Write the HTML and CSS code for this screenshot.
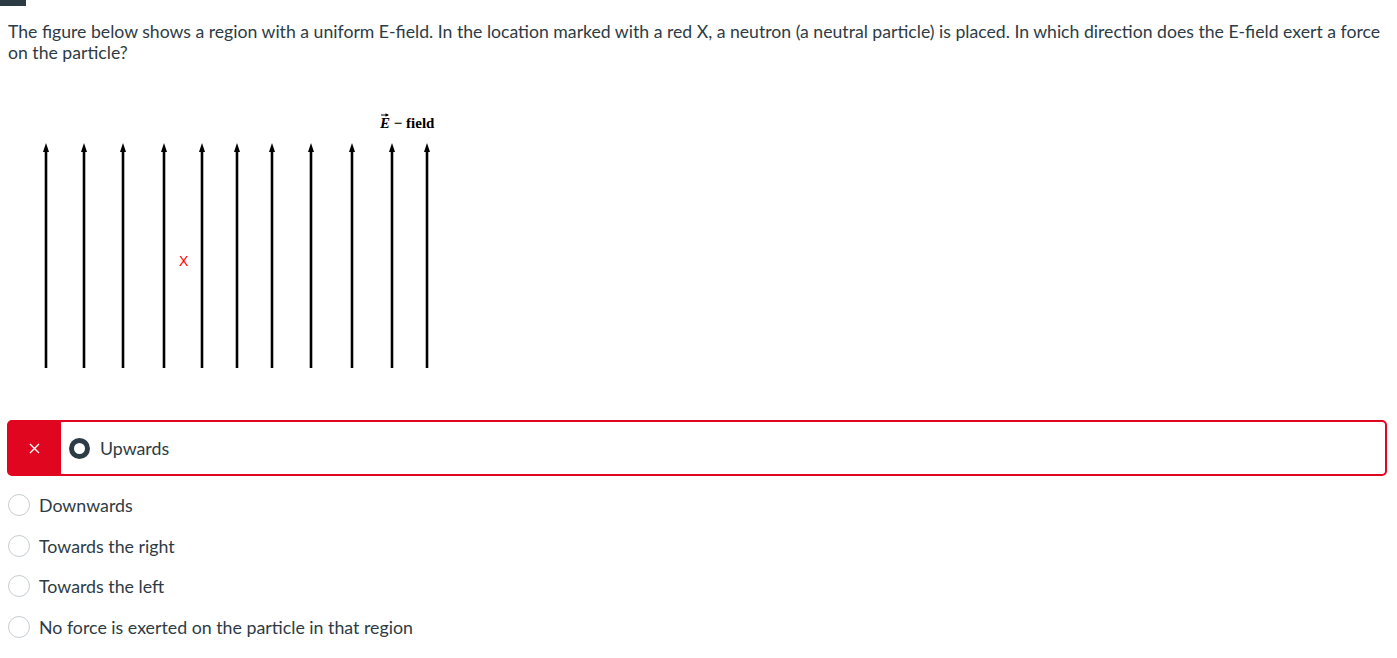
FILE: index.html
```html
<!DOCTYPE html>
<html>
<head>
<meta charset="utf-8">
<link rel="stylesheet" href="styles.css">
</head>
<body>
<div class="topbar"></div>
<div class="question">
  <p class="qtext">The figure below shows a region with a uniform E-field. In the location marked with a red X, a neutron (a neutral particle) is placed. In which direction does the E-field exert a force on the particle?</p>
  <div class="figure">
    <svg width="400" height="262" viewBox="0 0 400 262">
      <g stroke="#000" stroke-width="2.6">
        <line x1="6" y1="40" x2="6" y2="258"/>
        <line x1="44" y1="40" x2="44" y2="258"/>
        <line x1="83" y1="40" x2="83" y2="258"/>
        <line x1="124" y1="40" x2="124" y2="258"/>
        <line x1="162" y1="40" x2="162" y2="258"/>
        <line x1="197" y1="40" x2="197" y2="258"/>
        <line x1="232" y1="40" x2="232" y2="258"/>
        <line x1="271" y1="40" x2="271" y2="258"/>
        <line x1="312" y1="40" x2="312" y2="258"/>
        <line x1="352" y1="40" x2="352" y2="258"/>
        <line x1="387" y1="40" x2="387" y2="258"/>
      </g>
      <g fill="#000">
        <polygon points="6,33 9,42 3,42"/>
        <polygon points="44,33 47,42 41,42"/>
        <polygon points="83,33 86,42 80,42"/>
        <polygon points="124,33 127,42 121,42"/>
        <polygon points="162,33 165,42 159,42"/>
        <polygon points="197,33 200,42 194,42"/>
        <polygon points="232,33 235,42 229,42"/>
        <polygon points="271,33 274,42 268,42"/>
        <polygon points="312,33 315,42 309,42"/>
        <polygon points="352,33 355,42 349,42"/>
        <polygon points="387,33 390,42 384,42"/>
      </g>
      <line x1="341" y1="5" x2="348" y2="5" stroke="#000" stroke-width="1"/>
      <polygon points="349,5 345.5,3.3 345.5,6.7" fill="#000"/>
      <text x="340" y="18" class="elabel"><tspan class="ei">E</tspan> − field</text>
      <text x="139" y="156" class="redx">X</text>
    </svg>
  </div>
  <div class="answers">
    <div class="answer wrong">
      <div class="flag">
        <svg width="11" height="11" viewBox="0 0 11 11"><path d="M1 1 L10 10 M10 1 L1 10" stroke="#fff" stroke-width="1.4" fill="none"/></svg>
      </div>
      <div class="sel-radio"></div>
      <span class="label">Upwards</span>
    </div>
    <div class="answer">
      <div class="radio"></div>
      <span class="label">Downwards</span>
    </div>
    <div class="answer">
      <div class="radio"></div>
      <span class="label">Towards the right</span>
    </div>
    <div class="answer">
      <div class="radio"></div>
      <span class="label">Towards the left</span>
    </div>
    <div class="answer">
      <div class="radio"></div>
      <span class="label">No force is exerted on the particle in that region</span>
    </div>
  </div>
</div>
</body>
</html>
```
FILE: styles.css
```css
html, body {
  margin: 0;
  padding: 0;
  background: #fff;
}
body {
  font-family: Lato, "Liberation Sans", sans-serif;
  color: #2d3b45;
  font-size: 17.8px;
}
.topbar {
  width: 26px;
  height: 6px;
  background: #2d3b45;
}
.question {
  padding: 15px 2px 0 8px;
}
.qtext {
  margin: 0;
  line-height: 21px;
  font-size: 17.65px;
}
.figure {
  margin: 47px 0 0 32px;
  height: 262px;
}
.figure svg {
  display: block;
}
.elabel {
  font-family: "Liberation Serif", "DejaVu Serif", serif;
  font-weight: bold;
  font-size: 15px;
  fill: #000;
}
.ei {
  font-style: italic;
}
.redx {
  font-family: "Liberation Sans", sans-serif;
  font-size: 14px;
  fill: #ff0000;
}
.answers {
  margin-top: 48px;
  margin-left: -1px;
  margin-right: 8px;
}
.answer {
  display: flex;
  align-items: center;
  height: 40.5px;
}
.answer.wrong {
  height: 52px;
  border: 2px solid #e0061f;
  border-radius: 5px;
  margin-bottom: 9px;
}
.flag {
  width: 53px;
  align-self: stretch;
  background: #e0061f;
  display: flex;
  align-items: center;
  justify-content: center;
  margin-left: -1px;
}
.flag svg {
  display: block;
}
.sel-radio {
  box-sizing: border-box;
  width: 21px;
  height: 21px;
  border-radius: 50%;
  border: 5px solid #2d3b45;
  margin-left: 8px;
  margin-right: 10px;
}
.radio {
  box-sizing: border-box;
  width: 22px;
  height: 22px;
  border-radius: 50%;
  border: 1px solid #c7cdd1;
  margin-left: 1px;
  margin-right: 9px;
}
.label {
  font-size: 17.8px;
  line-height: 20px;
}
```
